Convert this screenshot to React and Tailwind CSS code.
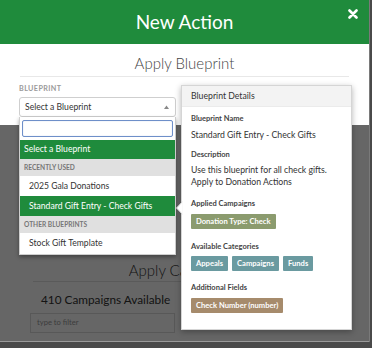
import React from "react";

function Badge({ children, color }) {
  return (
    <span className={`inline-flex items-center h-[15px] px-[5px] rounded-[1px] text-white font-bold text-[7.6px] ${color}`}>
      {children}
    </span>
  );
}

export default function App() {
  return (
    <div className="w-[372px] h-[348px] bg-[#4a4a4a] overflow-hidden relative" style={{ fontFamily: "Lato, 'Open Sans', sans-serif" }}>
      <div className="w-[370px] h-[342px] bg-white relative overflow-hidden border-r border-[#7a7a7a]">
        {/* header */}
        <div className="h-[44px] bg-[#1f8b3c] flex items-center justify-center relative">
          <span className="text-white text-[19px] leading-[24px]">New Action</span>
          <svg className="absolute right-[11px] top-[9px]" width="10" height="10" viewBox="0 0 10 10">
            <path d="M1.5 1.5 L8.5 8.5 M8.5 1.5 L1.5 8.5" stroke="white" strokeWidth="2.6" strokeLinecap="round" />
          </svg>
        </div>

        {/* body */}
        <div className="flex flex-col">
          <div className="pt-[9px] text-center text-[15px] leading-[20px] font-light text-[#444]">Apply Blueprint</div>
          <div className="mx-[20px] mt-[3px] border-b border-[#e8e8e8]" />

          <div className="pl-[19px] mt-[7px] flex flex-col">
            <div className="text-[7.2px] leading-[10px] font-bold text-[#9a9a9a] tracking-[0.4px]">BLUEPRINT</div>
            <div className="mt-[3px] w-[157px] h-[20px] border border-[#cfcfcf] rounded-[3px] flex items-center justify-between pl-[5px] pr-[6px]">
              <span className="text-[8.6px] text-[#333]">Select a Blueprint</span>
              <svg width="5" height="4" viewBox="0 0 5 4"><path d="M0 4 L2.5 0.5 L5 4 Z" fill="#888" /></svg>
            </div>
          </div>

          {/* lower content (dimmed) */}
          <div className="mt-[143px] text-center text-[15px] leading-[20px] font-light text-[#333]">Apply Campaigns</div>
          <div className="mx-[33px] mt-[1px] border-b border-[#e0e0e0]" />
          <div className="mt-[10px] pl-[41px] text-[11.8px] leading-[16px] text-[#333]">410 Campaigns Available</div>
          <div className="ml-[30px] mt-[5px] w-[145px] h-[20px] border border-[#ddd] flex items-center pl-[6px] text-[7.6px] text-[#999]">type to filter</div>
          <div className="ml-[40px] mt-[7px] text-[11px] text-[#333]">Select all Campaigns</div>
        </div>

        {/* dim overlay */}
        <div className="absolute left-0 right-0 top-[125px] bottom-0 bg-black/60" />
        <div className="absolute left-0 right-0 bottom-0 h-px bg-[#9a9a9a]" />

        {/* dropdown */}
        <div className="absolute left-[19px] top-[117px] w-[157px] bg-white border border-[#cfcfcf] border-t-0 shadow-[0_2px_4px_rgba(0,0,0,0.35)] pb-[1px]">
          <div className="px-[2px] pt-[3px] pb-[3px]">
            <div className="h-[17px] border border-[#6e8fc9] rounded-[2px] shadow-[inset_0_0_1px_rgba(80,120,200,0.5)]" />
          </div>
          <div className="h-[19px] bg-[#1f8b3c] text-white text-[8.6px] flex items-center pl-[4px]">Select a Blueprint</div>
          <div className="h-[17px] bg-[#e0e0e0] text-[#777] font-bold text-[6.6px] flex items-center pl-[4px]">RECENTLY USED</div>
          <div className="h-[20px] text-[#333] text-[8.6px] flex items-center pl-[9px]">2025 Gala Donations</div>
          <div className="h-[20px] bg-[#1f8b3c] text-white text-[8.6px] flex items-center pl-[9px]">Standard Gift Entry - Check Gifts</div>
          <div className="h-[17px] bg-[#e0e0e0] text-[#777] font-bold text-[6.6px] flex items-center pl-[4px]">OTHER BLUEPRINTS</div>
          <div className="h-[20px] text-[#333] text-[8.6px] flex items-center pl-[9px]">Stock Gift Template</div>
        </div>

        {/* popover */}
        <div className="absolute left-[181px] top-[85px] w-[171px] bg-white border border-[#d5d5d5] shadow-[0_2px_6px_rgba(0,0,0,0.3)]">
          <svg className="absolute left-[-6px] top-[115px]" width="7" height="14" viewBox="0 0 7 14">
            <path d="M7 0 L0.5 7 L7 14 Z" fill="white" stroke="#cfcfcf" strokeWidth="1" />
            <rect x="6.2" y="0" width="1" height="14" fill="white" />
          </svg>
          <div className="h-[21px] bg-[#f3f3f3] border-b border-[#ebebeb] flex items-center pl-[9px] text-[8.7px] text-[#333]">Blueprint Details</div>
          <div className="px-[9px] pt-[6px] pb-[16px] flex flex-col items-start">
            <div className="text-[7.5px] leading-[12px] font-bold text-[#444]">Blueprint Name</div>
            <div className="mt-[3px] text-[8.7px] leading-[13px] text-[#333]">Standard Gift Entry - Check Gifts</div>
            <div className="mt-[8px] text-[7.5px] leading-[12px] font-bold text-[#444]">Description</div>
            <div className="mt-[3px] text-[8.7px] leading-[12px] text-[#333]">Use this blueprint for all check gifts.<br />Apply to Donation Actions</div>
            <div className="mt-[10px] text-[7.5px] leading-[12px] font-bold text-[#444]">Applied Campaigns</div>
            <div className="mt-[4px] flex"><Badge color="bg-[#8b9b6e]">Donation Type: Check</Badge></div>
            <div className="mt-[12px] text-[7.5px] leading-[12px] font-bold text-[#444]">Available Categories</div>
            <div className="mt-[3px] flex gap-[4px]">
              <Badge color="bg-[#6a9aa0]">Appeals</Badge>
              <Badge color="bg-[#6a9aa0]">Campaigns</Badge>
              <Badge color="bg-[#6a9aa0]">Funds</Badge>
            </div>
            <div className="mt-[11px] text-[7.5px] leading-[12px] font-bold text-[#444]">Additional Fields</div>
            <div className="mt-[4px] flex"><Badge color="bg-[#a68b6c]">Check Number (number)</Badge></div>
          </div>
        </div>
      </div>
    </div>
  );
}
